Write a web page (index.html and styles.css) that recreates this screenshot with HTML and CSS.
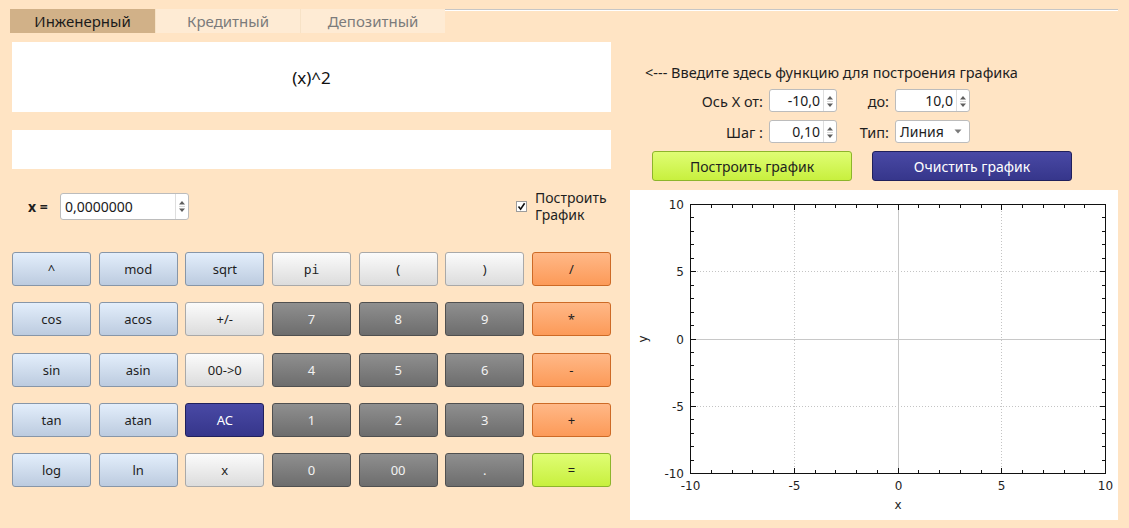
FILE: index.html
```html
<!DOCTYPE html>
<html lang="ru">
<head>
<meta charset="utf-8">
<title>Калькулятор</title>
<link rel="stylesheet" href="styles.css">
</head>
<body>
<div class="tabbar">
  <div class="tab active">Инженерный</div>
  <div class="tab">Кредитный</div>
  <div class="tab">Депозитный</div>
  <div class="tabline"></div>
</div>
<div class="main">
  <div class="left">
    <div class="display expr">(x)^2</div>
    <div class="display result"></div>
    <div class="xrow">
      <span class="xlabel">x =</span>
      <div class="spin xspin">
        <span class="val">0,0000000</span>
        <span class="arrows"><svg width="8" height="14" viewBox="0 0 8 14"><polygon points="1,5.5 4,2 7,5.5" class="tri"/><line x1="1" y1="7.5" x2="7" y2="7.5" class="sep"/><polygon points="1,9.5 4,13 7,9.5" class="tri"/></svg></span>
      </div>
      <label class="check">
        <span class="box"><svg width="9" height="9" viewBox="0 0 9 9"><path d="M1.5 4.6 L3.6 7.2 L7.6 1.3" class="tick"/></svg></span>
        <span class="checktext"><span class="cline">Построить</span><span class="cline">График</span></span>
      </label>
    </div>
    <div class="keys">
      <button class="key blue">^</button>
      <button class="key blue">mod</button>
      <button class="key blue">sqrt</button>
      <button class="key light mono">pi</button>
      <button class="key light">(</button>
      <button class="key light">)</button>
      <button class="key orange">/</button>

      <button class="key blue">cos</button>
      <button class="key blue">acos</button>
      <button class="key light">+/-</button>
      <button class="key dark">7</button>
      <button class="key dark">8</button>
      <button class="key dark">9</button>
      <button class="key orange">*</button>

      <button class="key blue">sin</button>
      <button class="key blue">asin</button>
      <button class="key light">00-&gt;0</button>
      <button class="key dark">4</button>
      <button class="key dark">5</button>
      <button class="key dark">6</button>
      <button class="key orange">-</button>

      <button class="key blue">tan</button>
      <button class="key blue">atan</button>
      <button class="key navy">AC</button>
      <button class="key dark">1</button>
      <button class="key dark">2</button>
      <button class="key dark">3</button>
      <button class="key orange">+</button>

      <button class="key blue">log</button>
      <button class="key blue">ln</button>
      <button class="key light">x</button>
      <button class="key dark">0</button>
      <button class="key dark">00</button>
      <button class="key dark">.</button>
      <button class="key green">=</button>
    </div>
  </div>
  <div class="right">
    <div class="hint">&lt;--- Введите здесь функцию для построения графика</div>
    <div class="form">
      <span class="flabel">Ось X от:</span>
      <div class="spin rspin">
        <span class="val">-10,0</span>
        <span class="arrows"><svg width="8" height="14" viewBox="0 0 8 14"><polygon points="1,5.5 4,2 7,5.5" class="tri"/><line x1="1" y1="7.5" x2="7" y2="7.5" class="sep"/><polygon points="1,9.5 4,13 7,9.5" class="tri"/></svg></span>
      </div>
      <span class="flabel">до:</span>
      <div class="spin rspin">
        <span class="val">10,0</span>
        <span class="arrows"><svg width="8" height="14" viewBox="0 0 8 14"><polygon points="1,5.5 4,2 7,5.5" class="tri"/><line x1="1" y1="7.5" x2="7" y2="7.5" class="sep"/><polygon points="1,9.5 4,13 7,9.5" class="tri"/></svg></span>
      </div>
      <span class="flabel">Шаг :</span>
      <div class="spin rspin">
        <span class="val">0,10</span>
        <span class="arrows"><svg width="8" height="14" viewBox="0 0 8 14"><polygon points="1,5.5 4,2 7,5.5" class="tri"/><line x1="1" y1="7.5" x2="7" y2="7.5" class="sep"/><polygon points="1,9.5 4,13 7,9.5" class="tri"/></svg></span>
      </div>
      <span class="flabel">Тип:</span>
      <div class="combo">
        <span class="cval">Линия</span>
        <svg width="8" height="5" viewBox="0 0 8 5"><polygon points="0.5,0.5 7.5,0.5 4,4.5" class="ctri"/></svg>
      </div>
    </div>
    <div class="actions">
      <button class="act green">Построить график</button>
      <button class="act navy">Очистить график</button>
    </div>
    <div class="plot">
      <svg width="488" height="330" viewBox="0 0 488 330">
        <g class="grid-dot">
          <line x1="164.5" y1="15" x2="164.5" y2="283"/>
          <line x1="371.5" y1="15" x2="371.5" y2="283"/>
          <line x1="61" y1="81.5" x2="475" y2="81.5"/>
          <line x1="61" y1="216.5" x2="475" y2="216.5"/>
        </g>
        <g class="grid-zero">
          <line x1="268.5" y1="15" x2="268.5" y2="283"/>
          <line x1="61" y1="149.5" x2="475" y2="149.5"/>
        </g>
        <rect x="60.5" y="14.5" width="415" height="269" class="frame"/>
        <path class="ticks" d="M81.5 283v-3M102.5 283v-3M122.5 283v-3M143.5 283v-3M185.5 283v-3M205.5 283v-3M226.5 283v-3M247.5 283v-3M288.5 283v-3M309.5 283v-3M330.5 283v-3M351.5 283v-3M392.5 283v-3M413.5 283v-3M434.5 283v-3M454.5 283v-3M164.5 283v-5M268.5 283v-5M371.5 283v-5
M81.5 15v3M102.5 15v3M122.5 15v3M143.5 15v3M185.5 15v3M205.5 15v3M226.5 15v3M247.5 15v3M288.5 15v3M309.5 15v3M330.5 15v3M351.5 15v3M392.5 15v3M413.5 15v3M434.5 15v3M454.5 15v3M164.5 15v5M268.5 15v5M371.5 15v5
M61 27.5h3M61 41.5h3M61 54.5h3M61 68.5h3M61 95.5h3M61 108.5h3M61 122.5h3M61 135.5h3M61 162.5h3M61 175.5h3M61 189.5h3M61 202.5h3M61 229.5h3M61 243.5h3M61 256.5h3M61 270.5h3M61 81.5h5M61 149.5h5M61 216.5h5
M475 27.5h-3M475 41.5h-3M475 54.5h-3M475 68.5h-3M475 95.5h-3M475 108.5h-3M475 122.5h-3M475 135.5h-3M475 162.5h-3M475 175.5h-3M475 189.5h-3M475 202.5h-3M475 229.5h-3M475 243.5h-3M475 256.5h-3M475 270.5h-3M475 81.5h-5M475 149.5h-5M475 216.5h-5"/>
        <g class="ylab">
          <text x="54" y="19">10</text>
          <text x="54" y="86">5</text>
          <text x="54" y="154">0</text>
          <text x="54" y="221">-5</text>
          <text x="54" y="288">-10</text>
        </g>
        <g class="xlab">
          <text x="60.5" y="300">-10</text>
          <text x="164.5" y="300">-5</text>
          <text x="268.5" y="300">0</text>
          <text x="371.5" y="300">5</text>
          <text x="475.5" y="300">10</text>
        </g>
        <text class="axtitle" x="268" y="319">x</text>
        <text class="axtitle" transform="translate(17 149) rotate(-90)">y</text>
      </svg>
    </div>
  </div>
</div>
</body>
</html>
```

FILE: styles.css
```css
* {
  box-sizing: border-box;
}

html,
body {
  margin: 0;
  padding: 0;
}

body {
  width: 1129px;
  height: 528px;
  overflow: hidden;
  background: #ffe4c4;
  font-family: "Noto Sans", "DejaVu Sans", sans-serif;
  font-size: 14px;
  color: #1e1e1e;
}

/* Tabs */
.tabbar {
  display: flex;
  align-items: flex-start;
  height: 24px;
  margin-top: 9px;
  padding: 0 11px 0 10px;
}

.tab {
  width: 145px;
  height: 24px;
  display: flex;
  align-items: center;
  justify-content: center;
  font-size: 15px;
  background: #feebd4;
  color: #7b7b7b;
}

.tab.active {
  background: #d1b188;
  color: #1a1a1a;
}

.tab + .tab {
  border-left: 1px solid #f7e2c6;
}

.tabline {
  flex: 1;
  height: 2px;
  border-top: 1px solid #c6c6c6;
  background: #ffffff;
}

/* Main */
.main {
  display: flex;
  gap: 19px;
  padding-left: 12px;
  margin-top: 9px;
}

.left {
  width: 599px;
  display: flex;
  flex-direction: column;
}

.display {
  background: #ffffff;
}

.expr {
  height: 70px;
  display: flex;
  align-items: center;
  justify-content: center;
  font-size: 17px;
  color: #111;
}

.result {
  height: 39px;
  margin-top: 18px;
}

.xrow {
  height: 34px;
  margin-top: 20px;
  display: flex;
  align-items: center;
}

.xlabel {
  width: 32px;
  margin-left: 16px;
  font-weight: bold;
  font-size: 14px;
}

.spin {
  display: flex;
  background: #ffffff;
  border: 1px solid #bcbcbc;
  border-radius: 3px;
}

.spin .val {
  flex: 1;
  display: flex;
  align-items: center;
  padding: 0 4px;
  font-size: 14px;
  color: #1a1a1a;
}

.spin .arrows {
  width: 13px;
  border-left: 1px solid #dedede;
  display: flex;
  align-items: center;
  justify-content: center;
}

.tri {
  fill: #5e5e5e;
}

.sep {
  stroke: #d8d8d8;
  stroke-width: 1;
}

.xspin {
  width: 129px;
  height: 27px;
}

.check {
  display: flex;
  align-items: center;
  margin-left: 327px;
}

.box {
  width: 11px;
  height: 11px;
  border: 1px solid #9c9c9c;
  background: #ffffff;
  display: flex;
  align-items: center;
  justify-content: center;
  margin-right: 8px;
}

.tick {
  fill: none;
  stroke: #111;
  stroke-width: 1.6;
}

.checktext {
  display: flex;
  flex-direction: column;
  font-size: 14px;
}

.cline {
  display: block;
  height: 17px;
  line-height: 17px;
}

/* Keypad */
.keys {
  margin-top: 29px;
  display: grid;
  grid-template-columns: repeat(7, 79px);
  justify-content: space-between;
  grid-auto-rows: 34px;
  row-gap: 16.25px;
}

.key,
.act {
  font-family: "Noto Sans", "DejaVu Sans", sans-serif;
  font-size: 13px;
  border-radius: 3px;
  border: 1px solid #8796a8;
  padding: 0;
  margin: 0;
  cursor: pointer;
}

.act {
  font-size: 14px;
}

.blue {
  background: linear-gradient(#e3eefb, #bccbdf);
  border-color: #8796a8;
  color: #1e1e1e;
}

.light {
  background: linear-gradient(#fbfbfb, #dcdcdc);
  border-color: #a9a9a9;
  color: #1e1e1e;
}

.mono {
  font-family: "DejaVu Sans Mono", monospace;
}

.dark {
  background: linear-gradient(#8f8f8f, #6d6d6d);
  border-color: #505050;
  color: #f2f2f2;
}

.orange {
  background: linear-gradient(#ffb887, #fc9a58);
  border-color: #cd6a26;
  color: #1e1e1e;
}

.navy {
  background: linear-gradient(#4949a5, #36368b);
  border-color: #20205c;
  color: #ffffff;
}

.green {
  background: linear-gradient(#dffd74, #c8f03e);
  border-color: #8db52b;
  color: #1e1e1e;
}

/* Right */
.right {
  width: 488px;
  display: flex;
  flex-direction: column;
}

.hint {
  margin: 21px 0 0 15px;
  line-height: 18px;
  font-size: 14.5px;
}

.form {
  margin-top: 8px;
  display: grid;
  grid-template-columns: 133px 68px 46px 75px;
  column-gap: 6px;
  row-gap: 8px;
  grid-auto-rows: 23px;
  align-items: stretch;
}

.flabel {
  display: flex;
  align-items: center;
  justify-content: flex-end;
  font-size: 14.5px;
}

.rspin .val {
  justify-content: flex-end;
  padding-right: 3px;
}

.combo {
  display: flex;
  align-items: center;
  justify-content: space-between;
  background: #ffffff;
  border: 1px solid #bcbcbc;
  border-radius: 3px;
  padding: 0 7px 0 4px;
  font-size: 14px;
}

.ctri {
  fill: #7a7a7a;
}

.actions {
  margin-top: 8px;
  display: flex;
  gap: 20px;
  padding-left: 22px;
}

.act {
  width: 200px;
  height: 30px;
}

.plot {
  margin-top: 9px;
  width: 488px;
  height: 330px;
  background: #ffffff;
}

.plot svg {
  display: block;
}

.grid-dot line {
  stroke: #c4c4c4;
  stroke-width: 1;
  stroke-dasharray: 1 2;
}

.grid-zero line {
  stroke: #c8c8c8;
  stroke-width: 1;
}

.frame {
  fill: none;
  stroke: #111;
  stroke-width: 1;
}

.ticks {
  stroke: #111;
  stroke-width: 1;
  fill: none;
}

.ylab text,
.xlab text,
.axtitle {
  font-family: "DejaVu Sans", "Noto Sans", sans-serif;
  font-size: 12px;
  fill: #1e1e1e;
}

.ylab text {
  text-anchor: end;
}

.xlab text,
.axtitle {
  text-anchor: middle;
}
```
